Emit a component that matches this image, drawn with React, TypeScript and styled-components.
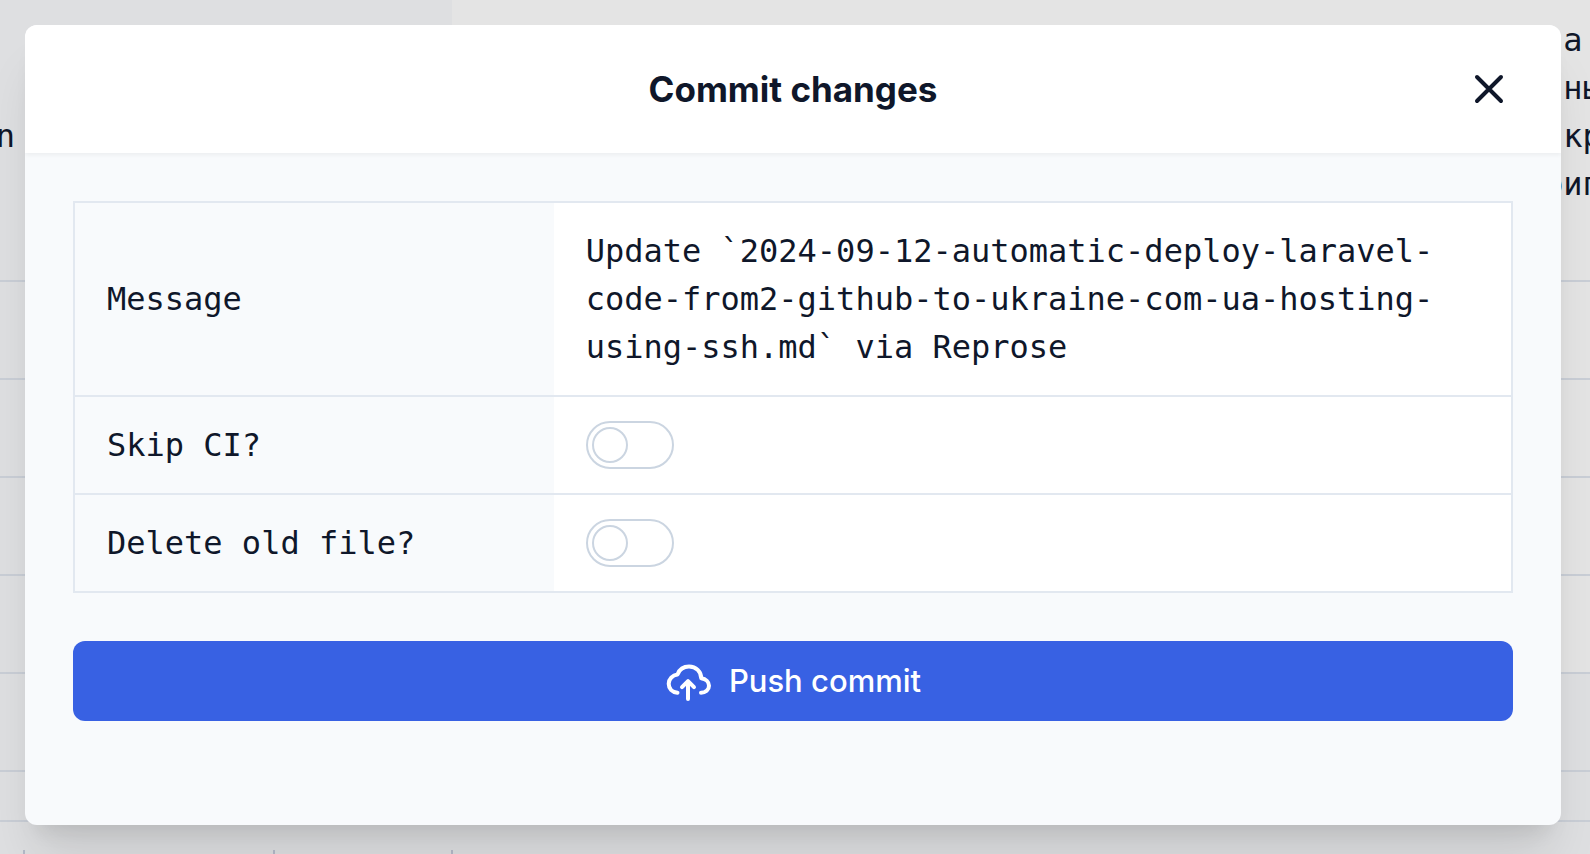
import React from "react";
import styled, { createGlobalStyle } from "styled-components";

const mono = `"DejaVu Sans Mono", "Liberation Mono", monospace`;

const GlobalStyle = createGlobalStyle`
  *, *::before, *::after { box-sizing: border-box; }
  html, body, #root { height: 100%; }
  body {
    margin: 0;
    overflow: hidden;
    color: #0f172a;
    background: #f8fafc;
    font: 400 32px/48px ${mono};
  }
`;

const Page = styled.div`
  position: relative;
  height: 100%;
  overflow: hidden;
`;

const Backdrop = styled.div`
  height: 100%;
  display: flex;
  flex-direction: column;
  background: #e4e4e4;
`;

const Row = styled.div<{ $height: number; $muted?: boolean }>`
  display: grid;
  grid-template-columns: 452px 1fr;
  flex: none;
  height: ${(p) => p.$height}px;
  background: ${(p) => (p.$muted ? "#dedfe1" : "#e4e4e4")};
  border-bottom: 2px solid #c9ced6;
`;

const Side = styled.div`
  background: #dedfe1;
`;

const Clip = styled.div`
  width: 15px;
  padding-top: 112px;
  display: flex;
  justify-content: flex-end;
`;

const Body = styled.div`
  display: flex;
  flex-direction: column;
  align-items: flex-end;
  padding-top: 16px;
`;

const Line = styled.div`
  width: 46px;
  white-space: pre;
`;

const Footer = styled.div`
  flex: 1;
  display: grid;
  grid-template-columns: 25px 250px 178px 1fr;
  padding-top: 28px;
  background: #dedfe1;
`;

const Tick = styled.div`
  border-right: 2px solid #b4b9c8;
`;

const Overlay = styled.div`
  position: absolute;
  inset: 0;
  padding: 25px 29px 29px 25px;
`;

const Dialog = styled.section`
  height: 100%;
  display: flex;
  flex-direction: column;
  overflow: hidden;
  border-radius: 12px;
  background: #f8fafc;
  box-shadow:
    0 40px 50px -10px rgba(0, 0, 0, 0.1),
    0 16px 20px -12px rgba(0, 0, 0, 0.1);
`;

const Header = styled.header`
  flex: none;
  display: grid;
  grid-template-columns: 80px 1fr 80px;
  align-items: center;
  height: 128px;
  padding: 0 32px;
  background: #fff;
  box-shadow: 0 2px 4px rgba(0, 0, 0, 0.05);
`;

const Title = styled.h2`
  grid-column: 2;
  margin: 0;
  text-align: center;
  font: 700 35px/56px Inter, sans-serif;
`;

const CloseButton = styled.button`
  display: grid;
  place-items: center;
  width: 80px;
  height: 80px;
  padding: 0;
  border: 0;
  color: inherit;
  background: none;
`;

const Form = styled.form`
  display: flex;
  flex-direction: column;
  gap: 48px;
  padding: 48px;
`;

const Fields = styled.div`
  border: 2px solid #e2e8f0;
`;

const Field = styled.div`
  display: grid;
  grid-template-columns: 1fr 2fr;
  & + & { border-top: 2px solid #e2e8f0; }
`;

const Label = styled.label`
  display: flex;
  align-items: center;
  padding: 24px 32px;
`;

const Value = styled.div`
  display: flex;
  align-items: center;
  padding: 24px 32px;
  background: #fff;
`;

const Message = styled.textarea`
  display: block;
  width: 100%;
  height: 144px;
  padding: 0;
  border: 0;
  outline: 0;
  resize: none;
  overflow: hidden;
  color: inherit;
  background: none;
  font: inherit;
`;

const Toggle = styled.input`
  appearance: none;
  display: flex;
  align-items: center;
  width: 88px;
  height: 48px;
  margin: 0;
  padding: 0 4px;
  border: 2px solid #cbd5e1;
  border-radius: 24px;
  background: #fff;
  &::before {
    content: "";
    width: 36px;
    height: 36px;
    border: 2px solid #cbd5e1;
    border-radius: 50%;
  }
  &:checked { justify-content: flex-end; }
`;

const PushButton = styled.button`
  display: flex;
  align-items: center;
  justify-content: center;
  gap: 16px;
  height: 80px;
  border: 0;
  border-radius: 12px;
  color: #fff;
  background: #3861e3;
  font: 500 31px/48px Inter, sans-serif;
`;

const message =
  "Update `2024-09-12-automatic-deploy-laravel-code-from2-github-to-ukraine-com-ua-hosting-using-ssh.md` via Reprose";

function CloseIcon() {
  return (
    <svg width="32" height="32" viewBox="0 0 32 32" fill="none" stroke="currentColor" strokeWidth="4" strokeLinecap="round" aria-hidden="true">
      <path d="M4 4 28 28M28 4 4 28" />
    </svg>
  );
}

function UploadIcon() {
  return (
    <svg width="48" height="40" viewBox="0 0 48 40" fill="none" stroke="currentColor" strokeWidth="4" strokeLinecap="round" strokeLinejoin="round" aria-hidden="true">
      <path d="M12.500 31.800C7 31 3.700 27.500 3.700 22.700C3.700 18 7.500 14 12.500 13.400C14.500 8.500 19 5.600 24 5.600C31 5.600 36.200 10.500 36.200 17.300C41 18 44 21 44 24.800C44 28.800 40.500 31.800 36 31.800" />
      <path d="M23 38V20.500M17 26.200 23 20.200 29 26.200" />
    </svg>
  );
}

export default function App() {
  return (
    <Page>
      <GlobalStyle />
      <Backdrop>
        <Row $height={282}>
          <Side><Clip>n</Clip></Side>
          <Body>
            <Line> а</Line>
            <Line> ны</Line>
            <Line> кр</Line>
            <Line>рип</Line>
          </Body>
        </Row>
        <Row $height={98}><Side /></Row>
        <Row $height={98}><Side /></Row>
        <Row $height={98}><Side /></Row>
        <Row $height={98}><Side /></Row>
        <Row $height={98} $muted />
        <Row $height={50} $muted />
        <Footer><Tick /><Tick /><Tick /></Footer>
      </Backdrop>
      <Overlay>
        <Dialog role="dialog" aria-modal="true" aria-labelledby="dialog-title">
          <Header>
            <Title id="dialog-title">Commit changes</Title>
            <CloseButton type="button" aria-label="Close"><CloseIcon /></CloseButton>
          </Header>
          <Form onSubmit={(e) => e.preventDefault()}>
            <Fields>
              <Field>
                <Label htmlFor="message">Message</Label>
                <Value><Message id="message" defaultValue={message} spellCheck={false} /></Value>
              </Field>
              <Field>
                <Label htmlFor="skip-ci">Skip CI?</Label>
                <Value><Toggle id="skip-ci" type="checkbox" /></Value>
              </Field>
              <Field>
                <Label htmlFor="delete-old">Delete old file?</Label>
                <Value><Toggle id="delete-old" type="checkbox" /></Value>
              </Field>
            </Fields>
            <PushButton type="submit"><UploadIcon />Push commit</PushButton>
          </Form>
        </Dialog>
      </Overlay>
    </Page>
  );
}
